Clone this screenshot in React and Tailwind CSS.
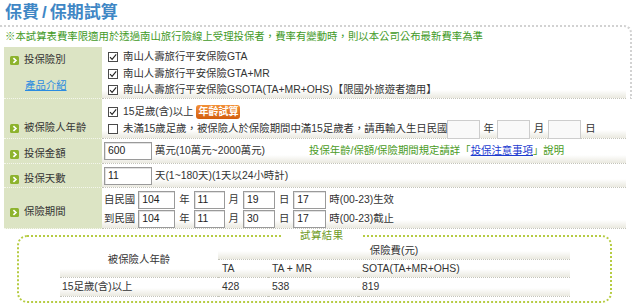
const cell =
  "border-b border-dotted border-[#c4c4ba] bg-[linear-gradient(to_bottom,#fff_calc(100%_-_8px),#eae9e0)]";

function Arrow() {
  return (
    <svg width="9" height="9" viewBox="0 0 9 9" className="shrink-0">
      <rect width="9" height="9" rx="1.5" fill="#8db32d" />
      <path d="M3.4 2.1 L5.9 4.5 L3.4 6.9" stroke="#fff" strokeWidth="1.7" fill="none" />
    </svg>
  );
}

function Check({ checked }) {
  return (
    <span className="inline-flex h-[10px] w-[10px] shrink-0 items-center justify-center border border-[#4a4a4a] bg-white">
      {checked && (
        <svg width="8" height="8" viewBox="0 0 8 8">
          <path d="M1 4.1 L3.1 6.3 L7.2 1.3" stroke="#222" strokeWidth="1.1" fill="none" />
        </svg>
      )}
    </span>
  );
}

function Field({ value, w }) {
  return (
    <span
      className={`inline-flex h-[18px] ${w} items-center border border-[#9a9a9a] bg-white pl-[3px] text-[#222] shadow-[inset_1px_1px_0_#e2e2e2]`}
    >
      {value}
    </span>
  );
}

function Blank() {
  return <span className="inline-block h-[19px] w-[33px] border border-[#cdcdcd] bg-[#f9f9f9]" />;
}

function Row({ label, h, labelPt, extra, children }) {
  return (
    <div className={`flex ${h}`}>
      <div className={`w-[98px] shrink-0 border-b border-dotted border-[#f4f6ec] bg-[#dce4c4] ${labelPt}`}>
        <div className="flex items-center gap-[5px] pl-[6px] leading-[16px]">
          <Arrow />
          <span>{label}</span>
        </div>
        {extra}
      </div>
      <div className={`flex-1 ${cell}`}>{children}</div>
    </div>
  );
}

export default function App() {
  const plans = [
    "南山人壽旅行平安保險GTA",
    "南山人壽旅行平安保險GTA+MR",
    "南山人壽旅行平安保險GSOTA(TA+MR+OHS)【限國外旅遊者適用】",
  ];

  return (
    <div className="h-[308px] w-[640px] overflow-hidden bg-white font-['Liberation_Sans','Noto_Sans_CJK_TC',sans-serif] text-[10.4px] text-[#333]">
      <h1 className="pl-[5px] text-[17px] font-bold leading-[25px] text-[#3f87c5]">
        保費<span className="px-[3px]">/</span>保期試算
      </h1>

      <div className="w-[632px] rounded-tr-[8px] border-t-2 border-r-2 border-dotted border-[#d2d2d2] px-[4px]">
        <p className="ml-[1px] pt-[3px] leading-[14px] text-[#3f9a1f]">
          ※本試算表費率限適用於透過南山旅行險線上受理投保者，費率有變動時，則以本公司公布最新費率為準
        </p>
        <div className="mt-[3px]">
          <Row
            label="投保險別"
            h="h-[52px]"
            labelPt="pt-[5px]"
            extra={
              <a className="mt-[10px] block pl-[21px] leading-[16px] text-[#2b8be0] underline">產品介紹</a>
            }
          >
            <div className="pl-[6px] pt-[2px] leading-[16.5px]">
              {plans.map((p) => (
                <div key={p} className="flex items-center gap-[5px]">
                  <Check checked />
                  <span>{p}</span>
                </div>
              ))}
            </div>
          </Row>
        </div>
      </div>

      <div className="ml-[4px] w-[622px]">
        <Row label="被保險人年齡" h="h-[40px]" labelPt="pt-[21px]">
          <div className="pl-[6px] pt-[5px]">
            <div className="flex h-[16px] items-center gap-[5px]">
              <Check checked />
              <span>15足歲(含)以上</span>
              <span className="ml-[-2px] rounded-[3px] bg-linear-to-b from-[#f39036] to-[#d25d0c] px-[2px] text-[10px] font-bold leading-[14px] text-white">
                年齡試算
              </span>
            </div>
            <div className="flex h-[18px] items-center">
              <Check />
              <span className="ml-[5px]">
                未滿15歲足歲，被保險人於保險期間中滿15足歲者，請再輸入生日民國
              </span>
              <Blank />
              <span className="mx-[3px]">年</span>
              <Blank />
              <span className="mx-[4px]">月</span>
              <Blank />
              <span className="mx-[4px]">日</span>
            </div>
          </div>
        </Row>

        <Row label="投保金額" h="h-[25px]" labelPt="pt-[7px]">
          <div className="flex h-[24px] items-center pl-[2px]">
            <Field value="600" w="w-[48px]" />
            <span className="ml-[3px] w-[154px]">萬元(10萬元~2000萬元)</span>
            <span className="text-[#4a9b24]">
              投保年齡/保額/保險期間規定請詳「
              <a className="text-[#1c3bd0] underline">投保注意事項</a>」說明
            </span>
          </div>
        </Row>

        <Row label="投保天數" h="h-[24px]" labelPt="pt-[7px]">
          <div className="flex h-[23px] items-center pl-[2px]">
            <Field value="11" w="w-[48px]" />
            <span className="ml-[3px]">天(1~180天)(1天以24小時計)</span>
          </div>
        </Row>

        <Row label="保險期間" h="h-[41px]" labelPt="pt-[16px]">
          <div className="pl-[2px] pt-[2px]">
            {[
              ["自民國", "19", "生效"],
              ["到民國", "30", "截止"],
            ].map(([a, d, e]) => (
              <div key={a} className="flex h-[19px] items-center">
                <span className="mr-[3px]">{a}</span>
                <Field value="104" w="w-[37px]" />
                <span className="mx-[4px]">年</span>
                <Field value="11" w="w-[31px]" />
                <span className="mx-[4px]">月</span>
                <Field value={d} w="w-[32px]" />
                <span className="mx-[4px]">日</span>
                <Field value="17" w="w-[33px]" />
                <span className="ml-[3px]">時(00-23){e}</span>
              </div>
            ))}
          </div>
        </Row>
      </div>

      <fieldset className="ml-[17px] w-[595px] min-w-0 rounded-[10px] border-2 border-dotted border-[#b6cc43] px-0 pb-[4px] pt-0">
        <legend className="ml-[264px] px-[17px] leading-[14px] tracking-[0.5px] text-[#6d9a22]">試算結果</legend>
        <div className="ml-[41px] grid w-[510px] grid-cols-[158px_50px_90px_212px] grid-rows-[17px_18px_19px]">
          <div className={`row-span-2 flex items-center justify-center ${cell}`}>被保險人年齡</div>
          <div className={`col-span-3 flex items-center justify-center ${cell}`}>保險費(元)</div>
          <div className={`flex items-center pl-[4px] ${cell}`}>TA</div>
          <div className={`flex items-center pl-[4px] ${cell}`}>TA + MR</div>
          <div className={`flex items-center pl-[4px] ${cell}`}>SOTA(TA+MR+OHS)</div>
          <div className={`flex items-center pl-[2px] ${cell}`}>15足歲(含)以上</div>
          <div className={`flex items-center pl-[4px] ${cell}`}>428</div>
          <div className={`flex items-center pl-[4px] ${cell}`}>538</div>
          <div className={`flex items-center pl-[4px] ${cell}`}>819</div>
        </div>
      </fieldset>
    </div>
  );
}
